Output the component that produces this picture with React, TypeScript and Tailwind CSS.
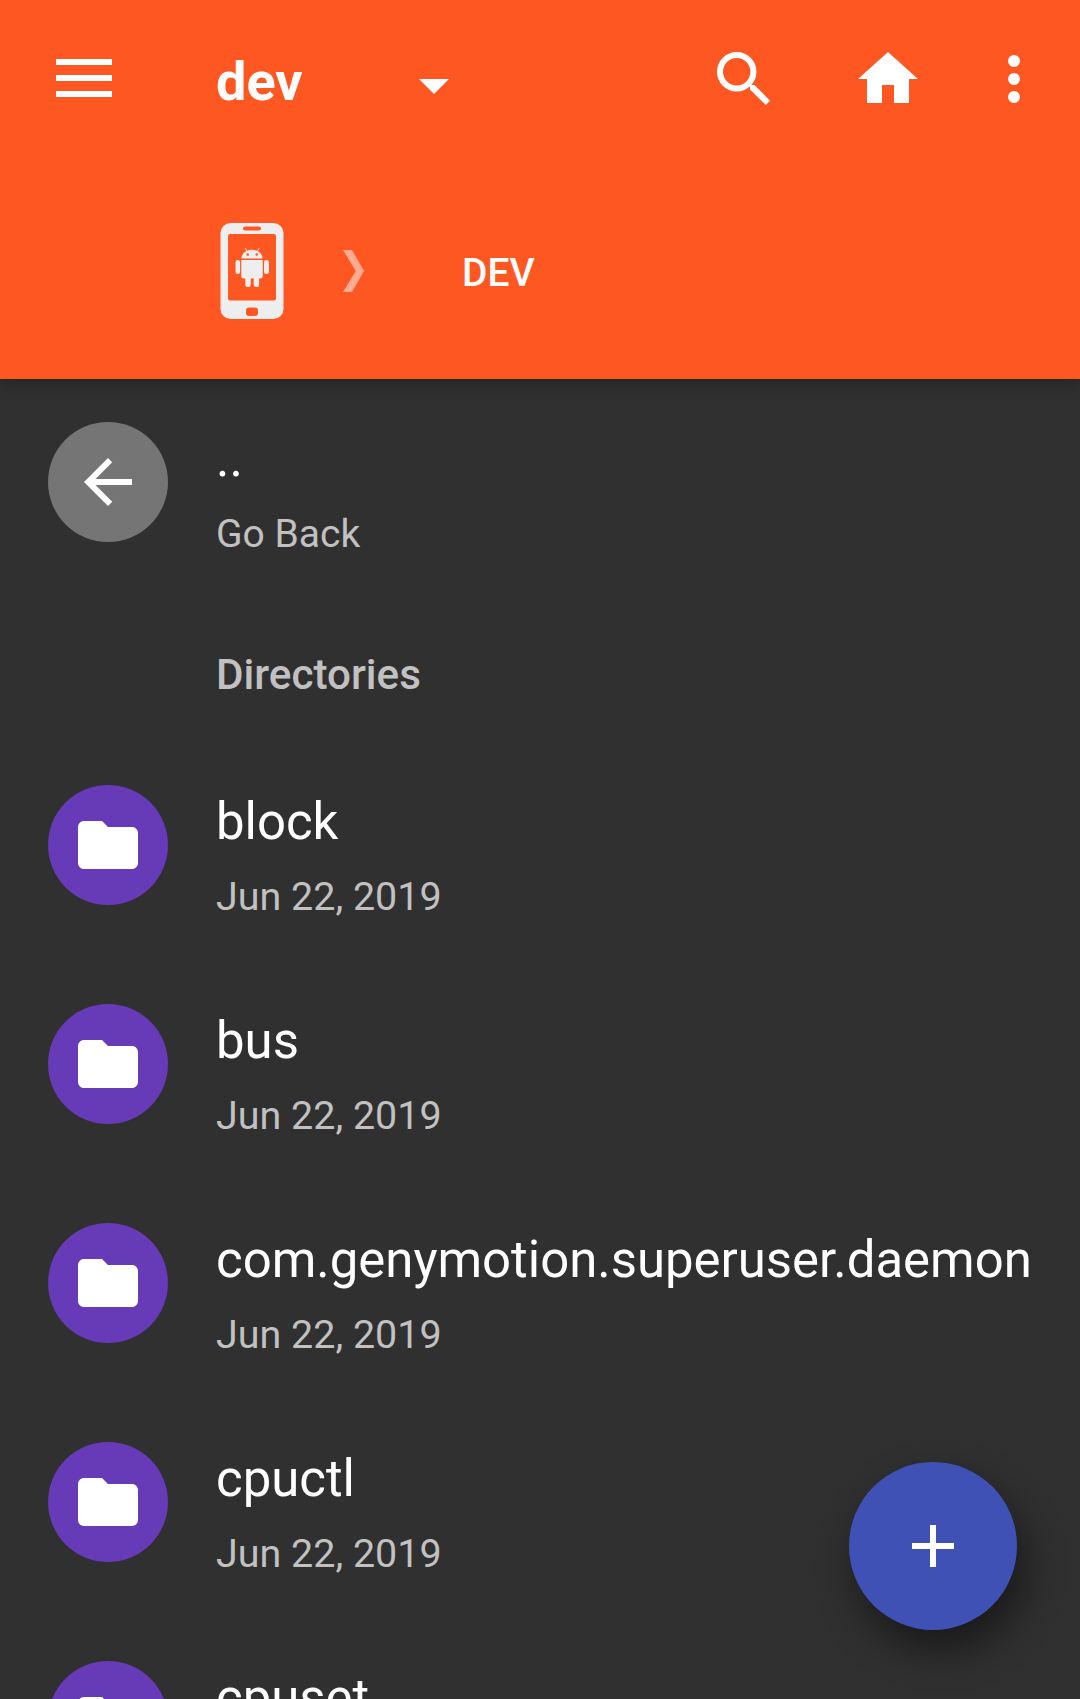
const folder = "M10 4H4c-1.1 0-1.99.9-1.99 2L2 18c0 1.1.9 2 2 2h16c1.1 0 2-.9 2-2V8c0-1.1-.9-2-2-2h-8l-2-2z";

function Row({ name, date, back = false }: { name: string; date: string; back?: boolean }) {
  return (
    <div className="flex h-[219px] shrink-0 items-start pl-12 pt-[43px]">
      <div className={`flex size-[120px] shrink-0 items-center justify-center rounded-full ${back ? "bg-[#757575]" : "bg-[#673ab7]"}`}>
        <svg viewBox="0 0 24 24" className="size-[72px]" fill="#fff">
          <path d={back ? "M20 11H7.83l5.59-5.59L12 4l-8 8 8 8 1.41-1.41L7.83 13H20v-2z" : folder} />
        </svg>
      </div>
      <div className="ml-12 whitespace-nowrap pt-1">
        <div className="h-[75px] text-[50.9px] leading-[66px] text-white">{name}</div>
        <div className={`leading-[66px] text-[#c1c1c1] ${back ? "text-[39px]" : "text-[39.45px]"}`}>{date}</div>
      </div>
    </div>
  );
}

function Phone() {
  return (
    <svg viewBox="0 0 64 96" className="h-24 w-16" fill="#eee">
      <rect x="0.5" width="63" height="96" rx="10" />
      <g fill="#ff5722">
        <rect x="8" y="11" width="48" height="66.5" rx="2" />
        <rect x="23" y="3.5" width="18" height="4" rx="2" />
        <rect x="26" y="84.5" width="12" height="8.5" rx="3" />
      </g>
      <path d="M21.3 35.5c.4-5 4.8-8.7 10.7-8.7s10.3 3.7 10.7 8.7zM21.3 37h21.4v16a2.5 2.5 0 0 1-2.5 2.5H23.8a2.5 2.5 0 0 1-2.5-2.5z" />
      <rect x="15.5" y="37" width="4.6" height="14" rx="2.3" />
      <rect x="44" y="37" width="4.9" height="14" rx="2.3" />
      <rect x="25.3" y="50" width="5.4" height="14" rx="2.6" />
      <rect x="33.7" y="50" width="5.4" height="14" rx="2.6" />
      <path d="M25 25l2.3 3.5M39.3 25L37 28.5" stroke="#eee" strokeWidth="0.9" />
      <circle cx="27.7" cy="31.5" r="1.3" fill="#ff5722" />
      <circle cx="36.8" cy="31.5" r="1.3" fill="#ff5722" />
    </svg>
  );
}

export default function App() {
  return (
    <div className="relative flex h-[1699px] w-[1080px] flex-col overflow-hidden bg-[#303030] font-['Roboto',sans-serif]">
      <header className="z-10 h-[379px] shrink-0 bg-[#ff5722] text-white shadow-[0_4px_16px_rgba(0,0,0,0.28)]">
        <div className="flex h-[158px] items-center">
          <svg viewBox="0 0 56 38" className="mb-0.5 ml-14 h-[38px] w-14" fill="#fff"><path d="M0 0h56v6H0zM0 16h56v6H0zM0 32h56v6H0z" /></svg>
          <div className="ml-[104px] w-[203px] pt-[5px] text-[54px] font-bold">dev</div>
          <svg viewBox="0 0 30 15" className="mt-[15px] h-[15px] w-[30px]" fill="#fff"><path d="M0 0h30L15 15z" /></svg>
          <svg viewBox="0 0 72 72" className="ml-[259px] size-[72px]" fill="#fff">
            <circle cx="28.7" cy="28.7" r="16.7" fill="none" stroke="#fff" strokeWidth="6" />
            <path d="M42 42h4.5L62 57.7 57.8 62 42 46.5z" />
          </svg>
          <svg viewBox="0 0 24 24" className="ml-[72px] size-[72px]" fill="#fff"><path d="M10 20v-6h4v6h5v-8h3L12 3 2 12h3v8z" /></svg>
          <svg viewBox="0 0 24 24" className="ml-[54px] size-[72px]" fill="#fff"><path d="M12 8a2 2 0 1 0 0-4 2 2 0 0 0 0 4zm0 2a2 2 0 1 0 0 4 2 2 0 0 0 0-4zm0 6a2 2 0 1 0 0 4 2 2 0 0 0 0-4z" /></svg>
        </div>
        <div className="flex h-[226px] items-center pl-[220px]">
          <Phone />
          <svg viewBox="0 0 21 42" className="ml-[59px] h-[42px] w-[21px]"><path d="M0 0h9l12 21L9 42H0l12.7-21z" fill="#ffab91" /></svg>
          <div className="ml-[98px] pt-1 text-[39px] font-medium">DEV</div>
        </div>
      </header>
      <main>
        <Row name=".." date="Go Back" back />
        <div className="flex h-[144px] items-center pl-[216px] pt-[10px] text-[42.2px] font-medium text-[#c1c1c1]">Directories</div>
        {["block", "bus", "com.genymotion.superuser.daemon", "cpuctl", "cpuset"].map((n) => <Row key={n} name={n} date="Jun 22, 2019" />)}
      </main>
      <button className="absolute left-[849px] top-[1462px] flex size-[168px] items-center justify-center rounded-full bg-[#3f51b5] shadow-[8px_20px_40px_rgba(0,0,0,0.48)]">
        <svg viewBox="0 0 24 24" className="size-[72px]" fill="#fff"><path d="M19 13h-6v6h-2v-6H5v-2h6V5h2v6h6v2z" /></svg>
      </button>
    </div>
  );
}
